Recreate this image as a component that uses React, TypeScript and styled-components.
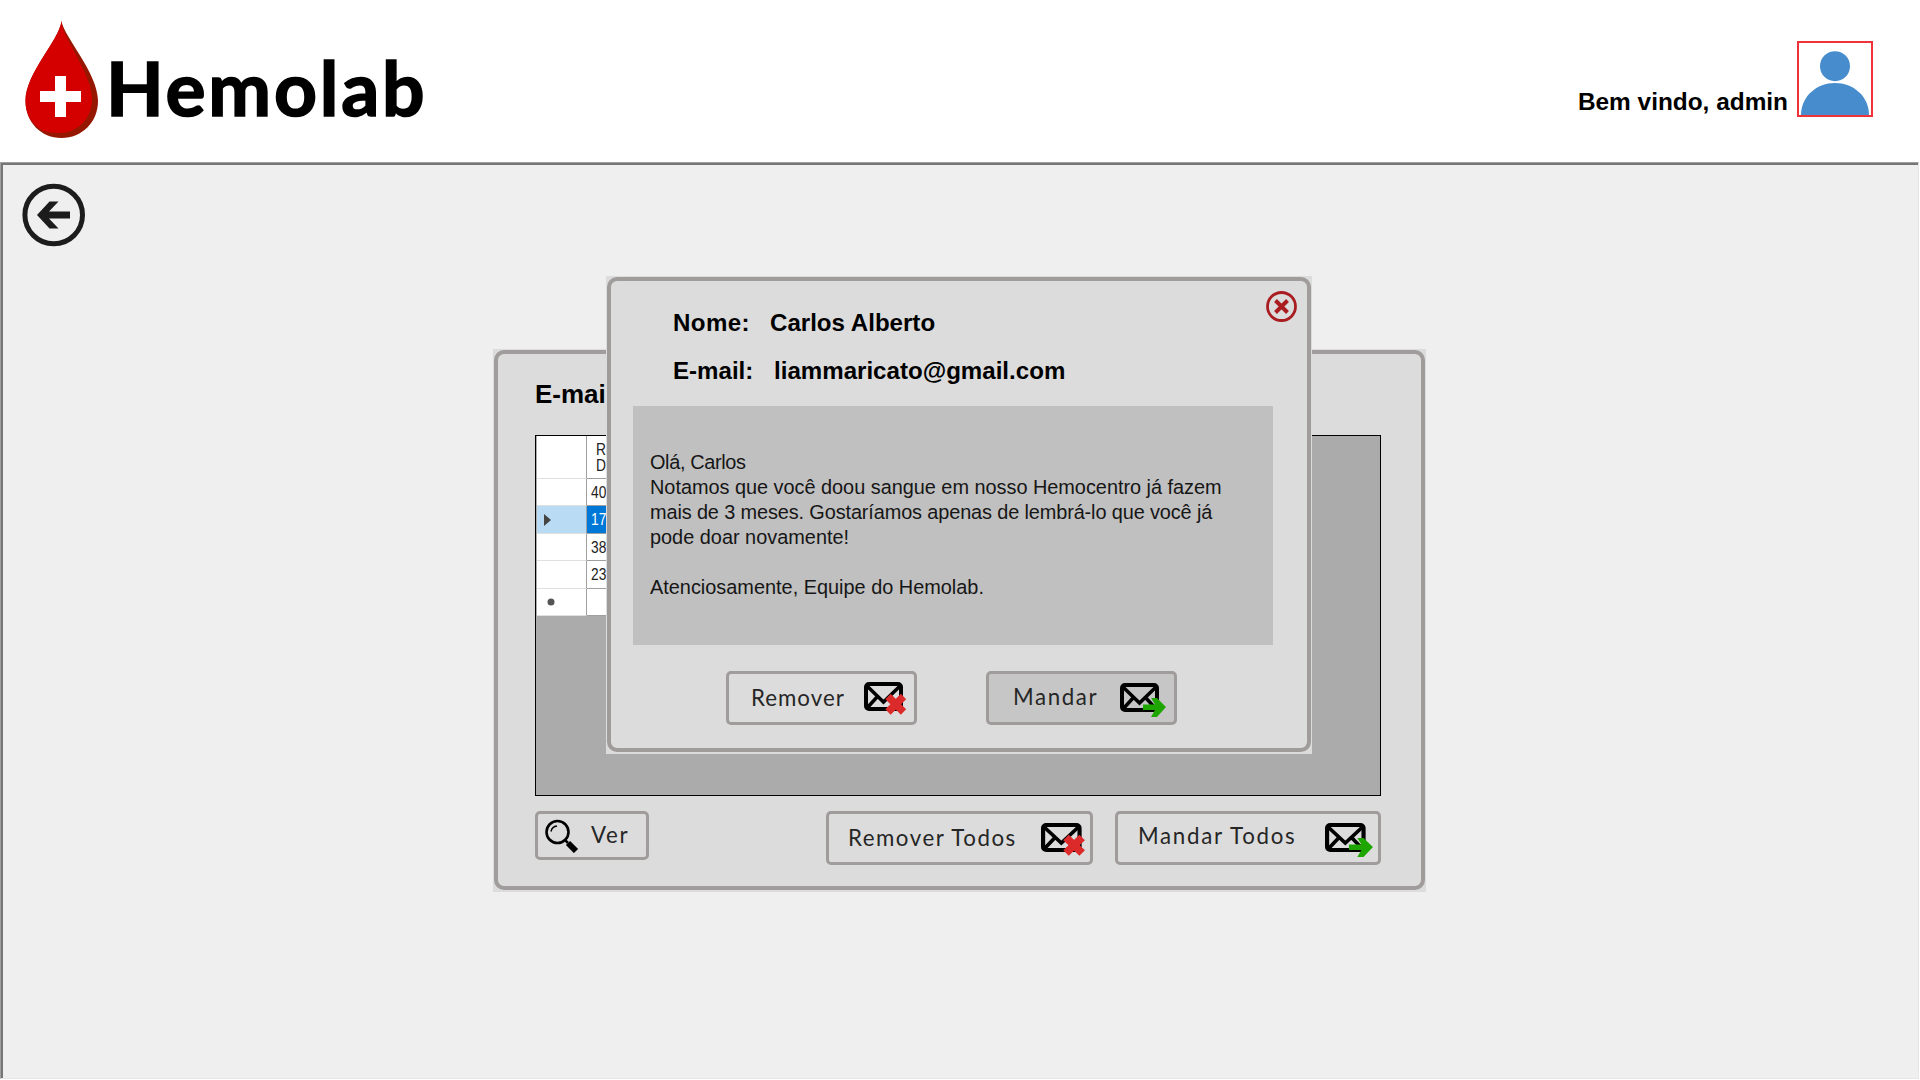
import React from 'react';
import styled, { createGlobalStyle } from 'styled-components';

const Global = createGlobalStyle`
  * { box-sizing: border-box; }
  body { margin: 0; background: #fff; }
`;

const Page = styled.div`
  width: 1920px;
  height: 1080px;
  display: flex;
  flex-direction: column;
  overflow: hidden;
  background: #fff;
  font-family: 'Liberation Sans', Arial, sans-serif;
  color: #000;
  white-space: nowrap;
`;

const Header = styled.header`
  height: 162px;
  flex: none;
  display: flex;
  justify-content: space-between;
  padding: 21px 47px 0 25px;
`;

const Brand = styled.div`
  display: flex;
  gap: 4px;
`;

const Wordmark = styled.h1`
  margin: 16px 0 0 3px;
  font: 700 75px/100px Lato, sans-serif;
  letter-spacing: 2.8px;
  -webkit-text-stroke: 1.6px #000;
  stroke-linejoin: round;
`;

const User = styled.div`
  display: flex;
  gap: 9px;
  padding-top: 20px;
`;

const Welcome = styled.span`
  margin-top: 46px;
  font-size: 24.4px;
  line-height: 30px;
  font-weight: 700;
`;

const Avatar = styled.div`
  width: 76px;
  height: 76px;
  border: 2px solid #f0323a;
  svg { display: block; }
`;

const Workspace = styled.main`
  position: relative;
  height: 917px;
  flex: none;
  width: 1919px;
  border: 1px solid #a0a0a0;
  border-right-color: #e6e6e6;
  border-bottom-color: #e6e6e6;
  background: #efefef;
  box-shadow: inset 2px 2px 0 #767676;
  padding: 20px 0 0 21px;
`;

const BackButton = styled.button`
  display: block;
  border: 0;
  padding: 0;
  background: none;
  svg { display: block; }
`;

const Window = styled.section<{ x: number; y: number; w: number; h: number }>`
  position: absolute;
  left: ${p => p.x}px;
  top: ${p => p.y}px;
  width: ${p => p.w}px;
  height: ${p => p.h}px;
  padding: 1px 1px 2px;
  background: #dcdcdc;
`;

const Frame = styled.div<{ thick: number; pad: string }>`
  height: 100%;
  display: flex;
  flex-direction: column;
  border: ${p => p.thick}px solid #a09c9b;
  border-radius: 10px;
  padding: ${p => p.pad};
`;

const Title = styled.h2`
  margin: 0 0 26px;
  font-size: 26px;
  line-height: 30px;
  font-weight: 700;
`;

const Grid = styled.div`
  height: 361px;
  flex: none;
  border: 1px solid #000;
  background: #ababab;
  padding-left: 1px;
`;

const GridRow = styled.div<{ h: number }>`
  display: grid;
  grid-template-columns: 50px 100px;
  width: 150px;
  height: ${p => p.h}px;
`;

const RowHead = styled.div<{ active?: boolean }>`
  display: flex;
  align-items: center;
  padding-left: 7px;
  background: ${p => (p.active ? '#b9dbf3' : '#fff')};
  border-right: 1px solid #a0a0a0;
  border-bottom: 1px solid #e0e0e0;
`;

const Cell = styled.div<{ active?: boolean; header?: boolean }>`
  padding: ${p => (p.header ? '6px 0 0 9px' : '4px 0 0 4px')};
  font-size: 16px;
  line-height: ${p => (p.header ? 16 : 20)}px;
  color: ${p => (p.active ? '#fff' : '#222')};
  background: ${p => (p.active ? '#0078d7' : '#fff')};
  border-bottom: 1px solid #a0a0a0;
`;

const Condensed = styled.div`
  transform: scaleX(0.86);
  transform-origin: left;
`;

const Actions = styled.div`
  display: flex;
  margin-top: 15px;
`;

const Button = styled.button<{ w: number; h: number; ml?: number; pad: number; pressed?: boolean }>`
  width: ${p => p.w}px;
  height: ${p => p.h}px;
  flex: none;
  margin-left: ${p => p.ml || 0}px;
  padding: 0 0 0 ${p => p.pad}px;
  display: flex;
  border: 3px solid #a09c9b;
  border-radius: 5px;
  background: ${p => (p.pressed ? '#c6c6c6' : '#dcdcdc')};
  color: #262626;
  svg { display: block; flex: none; }
`;

const Label = styled.span<{ w: number; top: number; ls: number; ml?: number }>`
  width: ${p => p.w}px;
  flex: none;
  margin: ${p => p.top}px 0 0 ${p => p.ml || 0}px;
  text-align: left;
  font: 400 22.3px/26px Lato, sans-serif;
  letter-spacing: ${p => p.ls}px;
`;

const Glyph = styled.span<{ top: number }>`
  margin-top: ${p => p.top}px;
`;

const Close = styled.button`
  position: absolute;
  right: 14px;
  top: 14px;
  border: 0;
  padding: 0;
  background: none;
  svg { display: block; }
`;

const Field = styled.div`
  display: flex;
  height: 48px;
  padding-left: 62px;
  font-size: 24.1px;
  line-height: 30px;
  font-weight: 700;
`;

const FieldName = styled.span<{ w: number; ls: number }>`
  width: ${p => p.w}px;
  letter-spacing: ${p => p.ls}px;
`;

const Message = styled.div`
  width: 640px;
  height: 239px;
  flex: none;
  margin: 2px 0 11px 22px;
  padding: 44px 0 0 17px;
  background: #c0c0c0;
  color: #161616;
`;

const Line = styled.p<{ ls?: number }>`
  margin: 0;
  height: 25px;
  font-size: 19.9px;
  line-height: 25px;
  letter-spacing: ${p => p.ls || 0}px;
`;

const Drop = () => (
  <svg width="74" height="118" viewBox="0 0 74 118">
    <path d="M36.5 0C39 16 73 52 73 80C73 101 57 117 36.5 117S.5 101 .5 80C.5 52 34 20 36.5 0Z" fill="#951700" />
    <path d="M36.5 0C37 17 67 52 67 78C67 99 51 112 34 112Q25 112 18 110Q.5 100 .5 80C.5 52 34 20 36.5 0Z" fill="#d40000" />
    <path d="M30 55h11v15h15v11H41v15H30V81H15V70h15z" fill="#fff" />
  </svg>
);

const BackIcon = () => (
  <svg width="64" height="64" viewBox="0 0 64 64">
    <circle cx="31.700" cy="32" r="28.800" fill="none" stroke="#1c1c1c" strokeWidth="5" />
    <path d="M15 32L27.500 18.500h9L27 28.500h21v7H27l9.500 10h-9z" fill="#1c1c1c" />
  </svg>
);

const Mail = ({ kind, large }: { kind: 'remove' | 'send'; large?: boolean }) => (
  <svg width={large ? 50 : 48} height="36" viewBox="0 0 48 36" preserveAspectRatio="none">
    <rect x="2" y="2" width="35" height="25" rx="3" fill="none" stroke="#000" strokeWidth="4" />
    <path d="M3 4L19.500 20L36 4M3 26L13.500 14.500M36 26L25.500 14.500" fill="none" stroke="#000" strokeWidth="3.500" />
    {kind === 'remove' ? (
      <path d="M24 14.500L39.500 30M39.500 14.500L24 30" stroke="#dc2a2a" strokeWidth="7.500" />
    ) : (
      <path d="M23 21.500h12l-4-6.500h6l9 9-9 10h-6l4-7H23z" fill="#1fa500" />
    )}
  </svg>
);

const Magnifier = () => (
  <svg width="34" height="34" viewBox="0 0 34 34">
    <circle cx="12.500" cy="13" r="11" fill="none" stroke="#000" strokeWidth="2.600" />
    <path d="M6 12.500Q7 7.500 12 7" fill="none" stroke="#000" strokeWidth="1.400" />
    <path d="M20 21L23 24" stroke="#000" strokeWidth="2.500" />
    <path d="M23 24L31 32" stroke="#000" strokeWidth="6" />
  </svg>
);

const rows = ['40', '17', '38', '23', ''];

const message = [
  { text: 'Olá, Carlos', ls: -0.35 },
  { text: 'Notamos que você doou sangue em nosso Hemocentro já fazem', ls: -0.02 },
  { text: 'mais de 3 meses. Gostaríamos apenas de lembrá-lo que você já', ls: -0.12 },
  { text: 'pode doar novamente!', ls: 0 },
  { text: '', ls: 0 },
  { text: 'Atenciosamente, Equipe do Hemolab.', ls: 0 },
];

export default function App() {
  return (
    <Page>
      <Global />
      <Header>
        <Brand>
          <Drop />
          <Wordmark>Hemolab</Wordmark>
        </Brand>
        <User>
          <Welcome>Bem vindo, admin</Welcome>
          <Avatar>
            <svg width="72" height="72" viewBox="0 0 72 72">
              <circle cx="36" cy="23.200" r="15" fill="#478dcd" />
              <path d="M2 72C2 53 18 40 36 40S70 53 70 72z" fill="#478dcd" />
            </svg>
          </Avatar>
        </User>
      </Header>
      <Workspace>
        <BackButton><BackIcon /></BackButton>
        <Window x={492} y={186} w={933} h={543}>
          <Frame thick={4} pad="25px 40px 0 37px">
            <Title>E-mai</Title>
            <Grid>
              <GridRow h={43}>
                <RowHead />
                <Cell header><Condensed>R<br />D</Condensed></Cell>
              </GridRow>
              {rows.map((r, i) => (
                <GridRow key={i} h={27.4}>
                  <RowHead active={i === 1}>
                    {i === 1 && <svg width="8" height="12"><path d="M0 0L7 6L0 12z" fill="#444" /></svg>}
                    {i === 4 && <svg width="14" height="8"><circle cx="7" cy="4" r="3.500" fill="#555" /></svg>}
                  </RowHead>
                  <Cell active={i === 1}><Condensed>{r}</Condensed></Cell>
                </GridRow>
              ))}
            </Grid>
            <Actions>
              <Button w={114} h={49} pad={7}>
                <Glyph top={5}><Magnifier /></Glyph>
                <Label w={45} top={8} ls={1.7} ml={12}>Ver</Label>
              </Button>
              <Button w={267} h={54} ml={177} pad={19}>
                <Label w={193} top={11} ls={1.5}>Remover Todos</Label>
                <Glyph top={9}><Mail kind="remove" large /></Glyph>
              </Button>
              <Button w={266} h={54} ml={22} pad={20}>
                <Label w={187} top={9} ls={1.7}>Mandar Todos</Label>
                <Glyph top={9}><Mail kind="send" large /></Glyph>
              </Button>
            </Actions>
          </Frame>
        </Window>
        <Window x={605} y={113} w={706} h={478}>
          <Frame thick={4} pad="27px 0 0 0">
            <Field><FieldName w={97} ls={0.4}>Nome:</FieldName>Carlos Alberto</Field>
            <Field><FieldName w={101} ls={0}>E-mail:</FieldName>liammaricato@gmail.com</Field>
            <Message>
              {message.map((m, i) => <Line key={i} ls={m.ls}>{m.text}</Line>)}
            </Message>
            <Actions>
              <Button w={191} h={54} ml={115} pad={22}>
                <Label w={113} top={11} ls={1}>Remover</Label>
                <Glyph top={8}><Mail kind="remove" /></Glyph>
              </Button>
              <Button w={191} h={54} ml={69} pad={24} pressed>
                <Label w={107} top={10} ls={1.6}>Mandar</Label>
                <Glyph top={9}><Mail kind="send" /></Glyph>
              </Button>
            </Actions>
          </Frame>
          <Close>
            <svg width="33" height="33" viewBox="0 0 33 33">
              <circle cx="16.500" cy="16.500" r="14" fill="none" stroke="#a91c20" strokeWidth="2.800" />
              <path d="M10.500 10.500l12 12M22.500 10.500l-12 12" stroke="#a91c20" strokeWidth="4" />
            </svg>
          </Close>
        </Window>
      </Workspace>
    </Page>
  );
}
